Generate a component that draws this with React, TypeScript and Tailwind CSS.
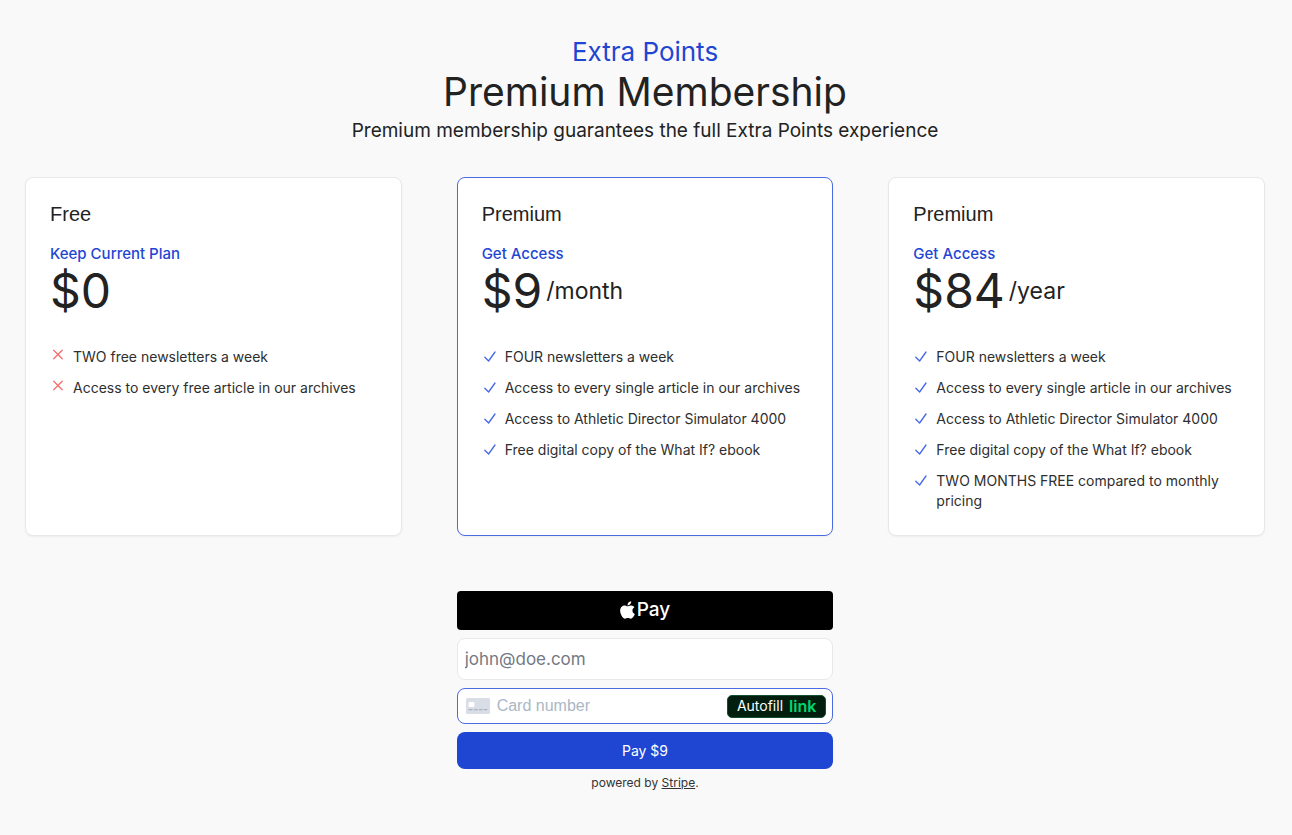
import { useState } from "react";
import { FaApple } from "react-icons/fa";

interface Plan {
  id: string;
  name: string;
  action: string;
  price: string;
  interval?: string;
  included: boolean;
  features: string[];
}

const plans: Plan[] = [
  {
    id: "free",
    name: "Free",
    action: "Keep Current Plan",
    price: "$0",
    included: false,
    features: ["TWO free newsletters a week", "Access to every free article in our archives"],
  },
  {
    id: "monthly",
    name: "Premium",
    action: "Get Access",
    price: "$9",
    interval: "/month",
    included: true,
    features: [
      "FOUR newsletters a week",
      "Access to every single article in our archives",
      "Access to Athletic Director Simulator 4000",
      "Free digital copy of the What If? ebook",
    ],
  },
  {
    id: "yearly",
    name: "Premium",
    action: "Get Access",
    price: "$84",
    interval: "/year",
    included: true,
    features: [
      "FOUR newsletters a week",
      "Access to every single article in our archives",
      "Access to Athletic Director Simulator 4000",
      "Free digital copy of the What If? ebook",
      "TWO MONTHS FREE compared to monthly pricing",
    ],
  },
];

function CheckIcon() {
  return (
    <svg viewBox="0 0 16 20" className="w-4 h-5 shrink-0" fill="none" stroke="#4468e6" strokeWidth="1.3" strokeLinecap="round" strokeLinejoin="round" aria-hidden="true">
      <path d="M2.8 10.2 6.6 14 13 5" />
    </svg>
  );
}

function CrossIcon() {
  return (
    <svg viewBox="0 0 16 20" className="w-4 h-5 shrink-0" fill="none" stroke="#f76e6e" strokeWidth="1.3" strokeLinecap="round" aria-hidden="true">
      <path d="M3.7 3.2 12.2 11.7M12.2 3.2 3.7 11.7" />
    </svg>
  );
}

function CardIcon() {
  return (
    <svg viewBox="0 0 24 16" className="w-6 h-4 shrink-0" aria-hidden="true">
      <rect width="24" height="16" rx="1.5" fill="#d9dde6" />
      <rect x="2.5" y="4" width="6" height="5" rx="1" fill="#fff" />
      <path d="M2.5 11.6h4M7.8 11.6h4M13 11.6h3.5M17.8 11.6h3.5" stroke="#a9b3c3" strokeWidth="1.1" />
    </svg>
  );
}

function PlanCard({ plan, selected, onSelect }: { plan: Plan; selected: boolean; onSelect: () => void }) {
  return (
    <article
      onClick={onSelect}
      className={`rounded-lg border bg-white p-6 shadow-xs cursor-pointer ${selected ? "border-[#4a6be2]" : "border-[#e7e8ea]"}`}
    >
      <h2 className="font-['Liberation_Sans',sans-serif] text-[20px] leading-6">{plan.name}</h2>
      <p className="mt-[18px] text-[15px] leading-5 font-medium text-[#1f46d3]">{plan.action}</p>
      <p className="mt-[3px] flex items-center gap-1">
        <span className="text-[48px] leading-12">{plan.price}</span>
        {plan.interval && <span className="text-[23px] leading-8">{plan.interval}</span>}
      </p>
      <ul className="mt-8 space-y-[11px] text-[14px] leading-5 text-[#2e2e2e]">
        {plan.features.map((feature) => (
          <li key={feature} className="flex items-start gap-[7px]">
            {plan.included ? <CheckIcon /> : <CrossIcon />}
            <span>{feature}</span>
          </li>
        ))}
      </ul>
    </article>
  );
}

function PaymentForm({ amount }: { amount: string }) {
  return (
    <form className="md:col-start-2 flex flex-col" onSubmit={(e) => e.preventDefault()}>
      <button type="button" aria-label="Pay with Apple Pay" className="flex h-[39px] items-center justify-center gap-[2px] rounded bg-black pb-[2px] text-white">
        <FaApple className="w-[15px] h-5" />
        <span className="text-[19px] leading-6 font-medium">Pay</span>
      </button>
      <input
        type="email"
        aria-label="Email"
        placeholder="john@doe.com"
        className="mt-2 h-[42px] rounded-lg border border-[#e7e8ea] bg-white px-[7px] text-[17px] placeholder:text-[#737984] outline-none"
      />
      <div className="mt-2 flex h-9 items-center gap-[7px] rounded-lg border border-[#4a6be2] bg-white pl-2 pr-[6px]">
        <CardIcon />
        <input
          type="text"
          inputMode="numeric"
          aria-label="Card number"
          placeholder="Card number"
          className="min-w-0 flex-1 font-['Liberation_Sans',sans-serif] text-[16px] placeholder:text-[#aab7c4] outline-none"
        />
        <button type="button" className="flex h-[23px] items-center gap-[6px] rounded-[5px] border border-[#12502f] bg-[#011e0f] px-[9px] text-[14px] leading-5 text-white">
          Autofill
          <span className="text-[16px] font-semibold text-[#00d66f]">link</span>
        </button>
      </div>
      <button type="submit" className="mt-2 h-[37px] rounded-lg bg-[#1f46d3] text-[14px] text-white">
        Pay {amount}
      </button>
      <p className="mt-1 text-center text-[12px] leading-5 text-[#333]">
        powered by{" "}
        <a href="#stripe" className="underline">Stripe</a>.
      </p>
    </form>
  );
}

export default function App() {
  const [selectedId, setSelectedId] = useState("monthly");
  const selected = plans.find((p) => p.id === selectedId) || plans[1];

  return (
    <main className="min-h-screen bg-[#f9f9f9] pl-[25px] pr-[27px] pt-9 pb-10 font-[Inter,sans-serif] text-[#222]">
      <header className="text-center">
        <p className="text-[26px] leading-8 text-[#1f46d3]">Extra Points</p>
        <h1 className="text-[39px] leading-12">Premium Membership</h1>
        <p className="mt-px text-[19px] leading-7">Premium membership guarantees the full Extra Points experience</p>
      </header>

      <div className="mt-8 grid md:grid-cols-3 gap-[55px]">
        {plans.map((plan) => (
          <PlanCard key={plan.id} plan={plan} selected={plan.id === selectedId} onSelect={() => setSelectedId(plan.id)} />
        ))}
        <PaymentForm amount={selected.price} />
      </div>
    </main>
  );
}
